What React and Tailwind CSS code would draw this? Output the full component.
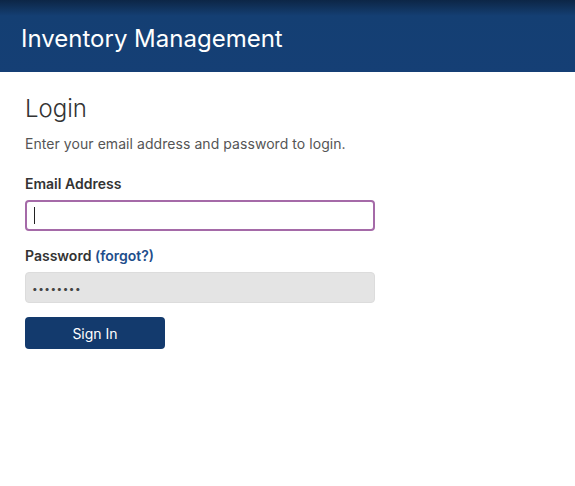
const App = () => {
  return (
    <div className="min-h-[486px] bg-white" style={{ fontFamily: "Inter, 'Noto Sans', sans-serif" }}>
      <header className="h-[72px] bg-gradient-to-b from-[#0c2646] via-[#143f73] via-[22%] to-[#153f75] flex items-center px-[21px]">
        <h1 className="text-[24px] text-white font-normal mt-[6px]">Inventory Management</h1>
      </header>
      <div className="px-[25px] pt-[22px]">
        <h2 className="text-[24px] text-[#333] font-light leading-[30px]">Login</h2>
        <p className="text-[14px] text-[#555] mt-[9px] tracking-[0.06px]">Enter your email address and password to login.</p>
        <form className="mt-[21px] w-[350px]">
          <label className="block text-[14px] font-semibold text-[#333] leading-[18px]">Email Address</label>
          <div className="mt-[7px] h-[31px] border-2 border-[#a56aa8] rounded-[4px] flex items-center px-[7px]">
            <span className="w-px h-[17px] bg-[#222]"></span>
          </div>
          <label className="block mt-[16px] text-[14px] font-semibold text-[#333] leading-[18px]">
            Password <span className="text-[#1e4e8c]">(forgot?)</span>
          </label>
          <div className="mt-[7px] h-[31px] bg-[#e4e4e4] border border-[#dcdcdc] rounded-[4px] flex items-center px-[6px]">
            <span className="text-[10px] tracking-[0.5px] text-[#444] leading-none">••••••••</span>
          </div>
          <button type="button" className="mt-[14px] w-[140px] h-[32px] bg-[#133a6d] text-white text-[14px] rounded-[4px]">
            Sign In
          </button>
        </form>
      </div>
    </div>
  );
};

export default App;
